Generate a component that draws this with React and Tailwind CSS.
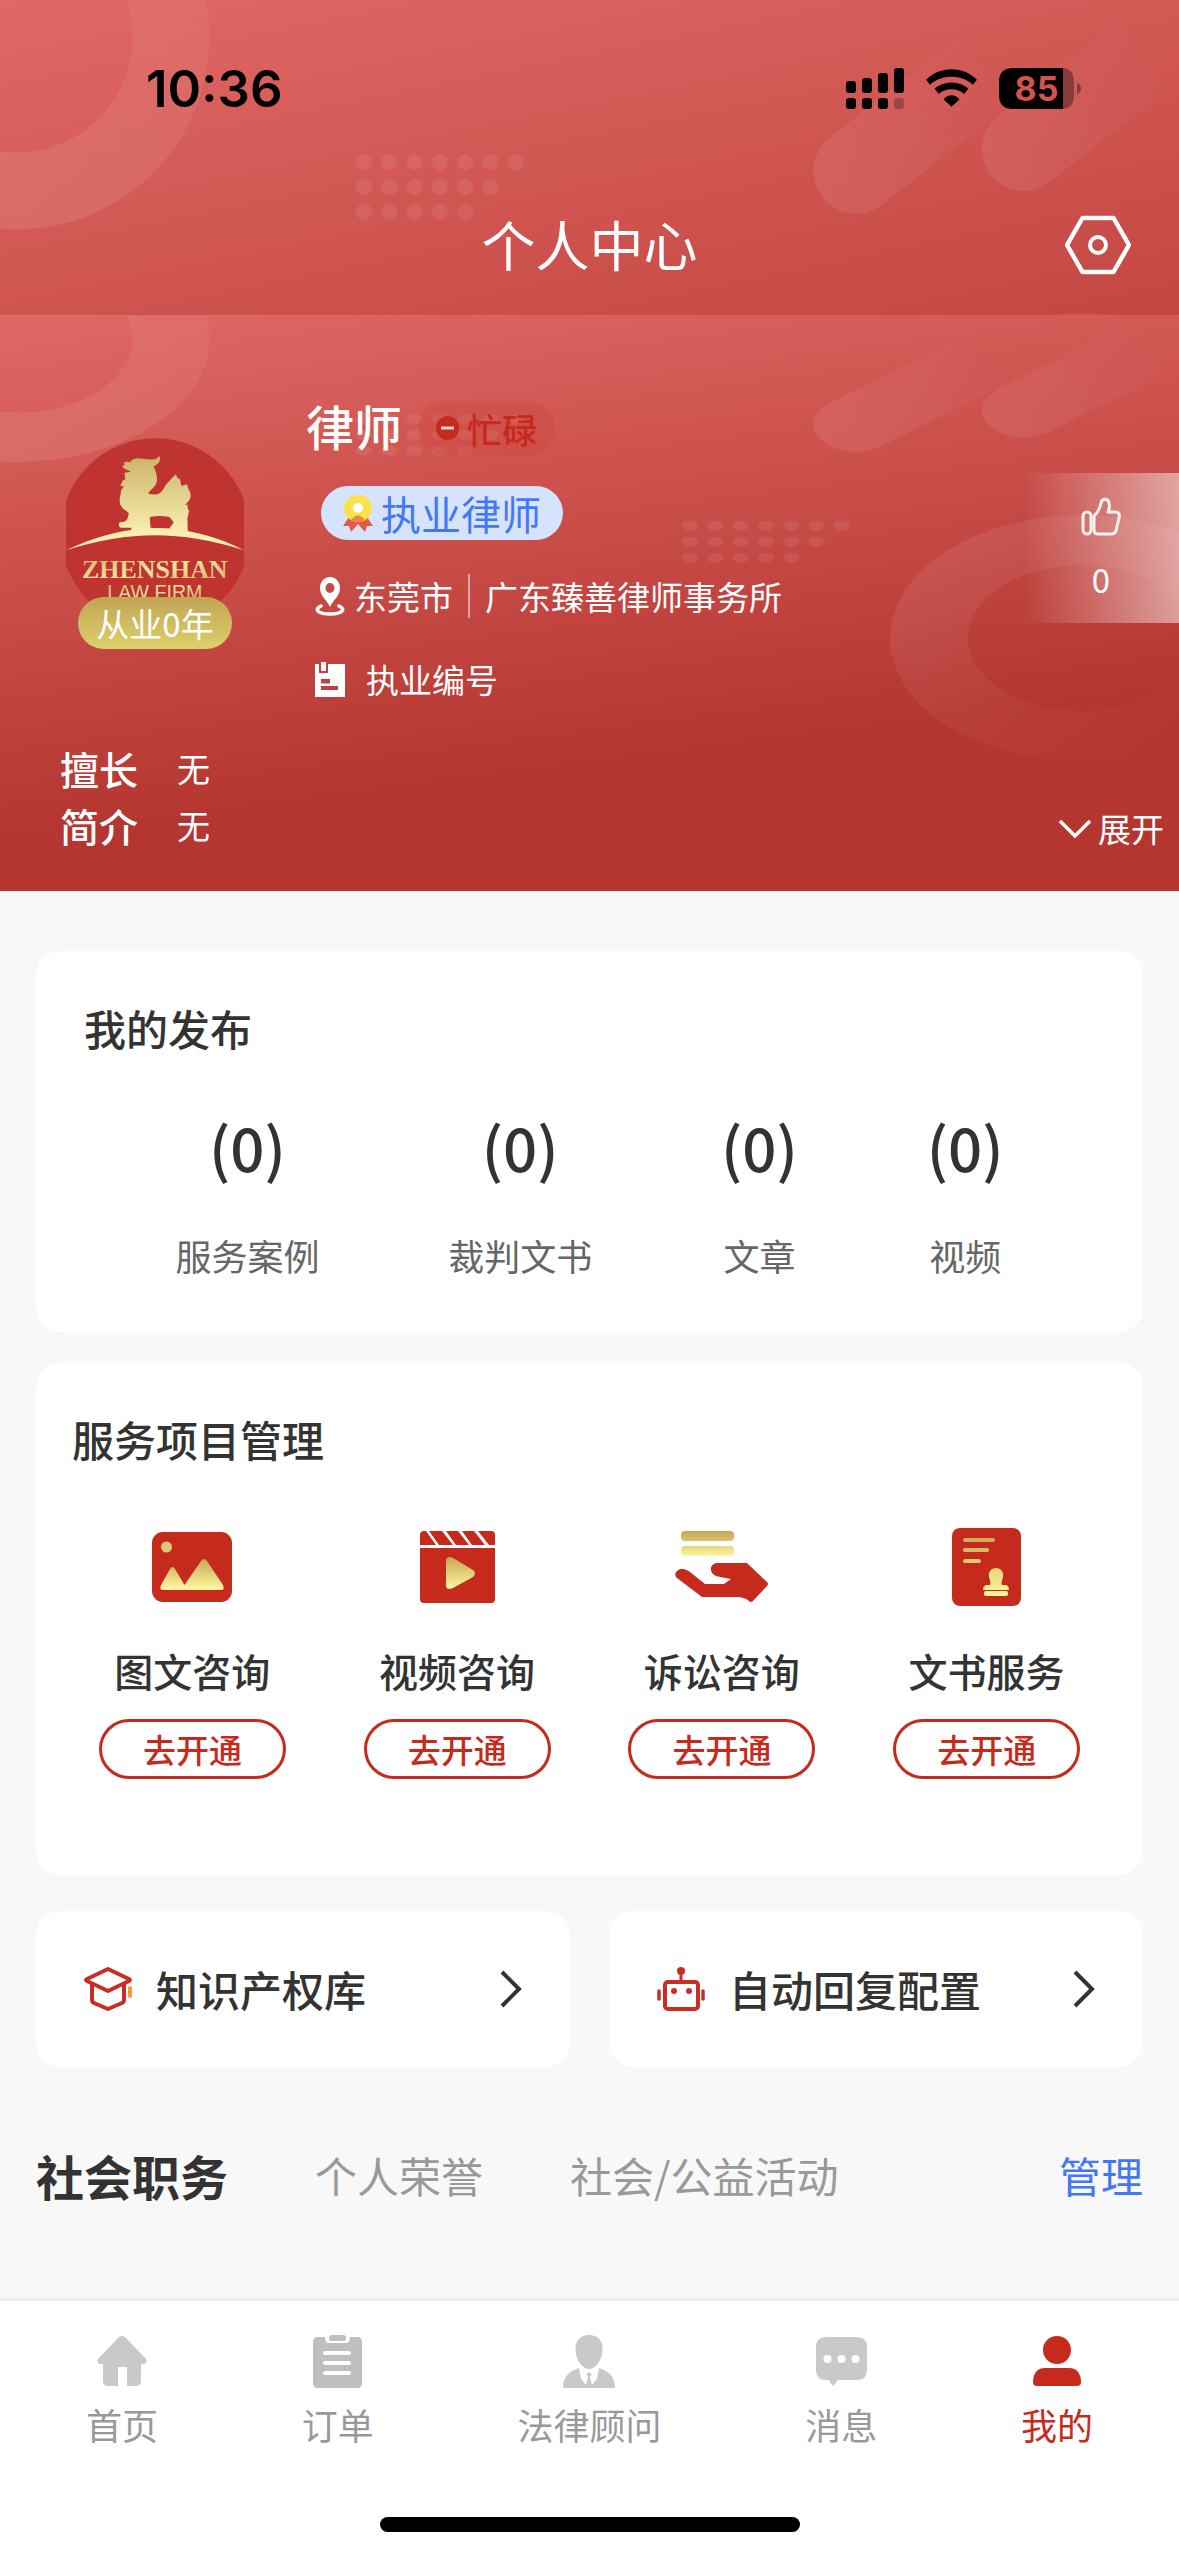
import React, { useState } from "react";

// Shared decorative banner, drawn on a 1179x900 canvas
const BannerArt = ({ id, fit }) => {
  const dotRows = [7, 6, 5];
  return (
    <svg
      className="absolute inset-0 w-full h-full"
      viewBox="0 0 1179 900"
      preserveAspectRatio={fit}
      aria-hidden="true"
    >
      <defs>
        <linearGradient id={`${id}-bg`} gradientUnits="userSpaceOnUse" x1="0" y1="0" x2="158" y2="790">
          <stop offset="0" stopColor="#e06865" />
          <stop offset="1" stopColor="#b53631" />
        </linearGradient>
        <linearGradient id={`${id}-ring`} gradientUnits="userSpaceOnUse" x1="60" y1="230" x2="200" y2="-120">
          <stop offset="0" stopColor="#fff" stopOpacity="0.1" />
          <stop offset="1" stopColor="#fff" stopOpacity="0.02" />
        </linearGradient>
        <linearGradient id={`${id}-arc`} gradientUnits="userSpaceOnUse" x1="900" y1="440" x2="1180" y2="640">
          <stop offset="0" stopColor="#fff" stopOpacity="0.08" />
          <stop offset="1" stopColor="#fff" stopOpacity="0" />
        </linearGradient>
        <linearGradient id={`${id}-p1`} gradientUnits="userSpaceOnUse" x1="820" y1="199" x2="990" y2="66">
          <stop offset="0" stopColor="#fff" stopOpacity="0.09" />
          <stop offset="1" stopColor="#fff" stopOpacity="0" />
        </linearGradient>
        <linearGradient id={`${id}-p2`} gradientUnits="userSpaceOnUse" x1="990" y1="176" x2="1150" y2="51">
          <stop offset="0" stopColor="#fff" stopOpacity="0.08" />
          <stop offset="1" stopColor="#fff" stopOpacity="0" />
        </linearGradient>
      </defs>
      <rect width="1179" height="900" fill={`url(#${id}-bg)`} />
      <circle cx="17" cy="37" r="154" fill="none" strokeWidth="77" stroke={`url(#${id}-ring)`} />
      <circle cx="1082" cy="505" r="153" fill="none" strokeWidth="78" stroke={`url(#${id}-arc)`} />
      <path d="M856 171 L1100 -20" strokeWidth="85" strokeLinecap="round" stroke={`url(#${id}-p1)`} />
      <path d="M1024 149 L1240 -20" strokeWidth="84" strokeLinecap="round" stroke={`url(#${id}-p2)`} />
      <g fill="#fff" fillOpacity="0.08">
        {dotRows.map((count, row) =>
          Array.from({ length: count }, (_, i) => (
            <React.Fragment key={`${row}-${i}`}>
              <circle cx={364 + i * 25.3} cy={162 + row * 25} r="8" />
              <circle cx={690 + i * 25.3} cy={329 + row * 25} r="8" />
            </React.Fragment>
          ))
        )}
      </g>
    </svg>
  );
};

const StatusIcons = () => (
  <div className="flex items-center">
    <svg className="w-[58px] h-[41px]" viewBox="0 0 58 41" aria-hidden="true">
      <rect x="0" y="13" width="10" height="12" rx="3" />
      <rect x="16" y="10" width="10" height="15" rx="3" />
      <rect x="32" y="5" width="10" height="20" rx="3" />
      <rect x="48" y="0" width="10" height="25" rx="3" />
      <rect x="0" y="30" width="10" height="11" rx="3" />
      <rect x="16" y="30" width="10" height="11" rx="3" />
      <rect x="32" y="30" width="10" height="11" rx="3" />
      <rect x="48" y="30" width="10" height="11" rx="3" fillOpacity="0.25" />
    </svg>
    <svg className="ml-[22px] w-[51px] h-[38px]" viewBox="0 0 150 111" aria-hidden="true">
      <path d="M0 31 C42 -10 108 -10 150 31 L138 46 C104 15 46 15 12 46 Z" />
      <path d="M25 57 C53 33 97 33 125 57 L112 73 C92 55 58 55 38 73 Z" />
      <path d="M52 89 C64 73 86 73 98 89 L75 111 Z" />
    </svg>
    <div className="relative ml-[22px] w-[82px] h-[41px]">
      <svg className="w-full h-full" viewBox="0 0 82 41" aria-hidden="true">
        <path d="M14 0 H64 V41 H14 Q0 41 0 27 V14 Q0 0 14 0 Z" />
        <path d="M64 0 Q75 1 75 14 V27 Q75 40 64 41 Z" fillOpacity="0.35" />
        <path d="M78 14.500 Q82 17 82 20.500 Q82 24 78 26.500 Z" fillOpacity="0.35" />
      </svg>
      <span className="absolute inset-y-0 left-0 w-[75px] text-center font-['Inter',sans-serif] font-bold text-[34px] leading-[41px] text-[#d1544f]">
        85
      </span>
    </div>
  </div>
);

const FirmLogo = () => (
  <svg className="w-[178px] h-[190px]" viewBox="47 39 535 570" role="img" aria-label="Zhenshan Law Firm">
    <defs>
      <linearGradient id="gold" gradientUnits="userSpaceOnUse" x1="0" y1="92" x2="0" y2="330">
        <stop offset="0" stopColor="#cdb36a" />
        <stop offset="1" stopColor="#f9f0b0" />
      </linearGradient>
      <linearGradient id="goldText" x1="0" y1="0" x2="1" y2="1">
        <stop offset="0" stopColor="#cfae62" />
        <stop offset="0.5" stopColor="#f2e29c" />
        <stop offset="1" stopColor="#cfae62" />
      </linearGradient>
    </defs>
    <circle cx="315" cy="324" r="285" fill="#bf3431" />
    <path
      fill="url(#gold)"
      fillRule="evenodd"
      d="M328 92 C332 105 328 116 310 123 C318 138 322 155 320 168 C318 185 303 192 294 204 C298 208 303 208 312 208 C325 209 330 204 334 199 C342 190 343 188 345 182 C352 172 362 165 366 158 L377 148 L383 160 L388 161 L391 167 L393 182 L411 178 C413 188 416 194 420 201 C424 217 420 228 403 240 L412 238 L413 250 L417 258 C415 268 412 275 412 283 L413 322 L243 322 L243 308 L212 308 C203 304 205 296 209 292 C222 292 230 288 232 280 L236 264 C228 258 215 250 210 238 C207 228 208 215 212 205 C210 197 215 190 222 184 L210 182 L218 166 L225 163 L223 143 L241 140 C232 132 222 134 216 124 L224 117 C218 112 222 107 240 111 C243 104 250 100 262 99 L290 102 C305 104 318 106 328 92 Z M299 276 C320 271 340 272 358 276 L371 292 L357 311 L301 308 Z"
    />
    <path fill="url(#gold)" d="M47 376 Q180 312 314 309 Q460 312 582 376 Q440 331 314 331 Q190 331 47 376 Z" />
    <text
      x="314"
      y="459"
      textAnchor="middle"
      fill="url(#goldText)"
      className="font-['Liberation_Serif',serif] font-bold text-[78px]"
    >
      ZHENSHAN
    </text>
    <text
      x="314"
      y="523"
      textAnchor="middle"
      fill="url(#goldText)"
      className="font-['Liberation_Sans',sans-serif] text-[59px]"
    >
      LAW FIRM
    </text>
  </svg>
);

const MedalIcon = () => (
  <svg className="w-[30px] h-[37px]" viewBox="0 0 30 37" aria-hidden="true">
    <path fill="#e25b49" d="M8 19 L0 31 L6 31 L8 37 L15 29 L22 37 L24 31 L30 31 L22 19 Z" />
    <ellipse cx="15" cy="13.500" rx="14" ry="13.500" fill="#fbe14b" />
    <path fill="#e98a4c" d="M8 25 Q15 16 22 25 Q15 29 8 25 Z" />
    <circle cx="15" cy="13" r="5" fill="#fff" />
  </svg>
);

const PinIcon = () => (
  <svg className="w-[30px] h-[39px]" viewBox="0 0 30 39" aria-hidden="true">
    <path
      fill="#fff"
      fillRule="evenodd"
      d="M15 0 C21 0 25 5 25 11 C25 19 18 23 15 30 C12 23 5 19 5 11 C5 5 9 0 15 0 Z M15 6 A4.500 5 0 1 0 15 16 A4.500 5 0 1 0 15 6 Z"
    />
    <path
      d="M6 29 C-1 32 2 37 15 37 C28 37 31 32 24 29"
      fill="none"
      stroke="#fff"
      strokeWidth="3.500"
      strokeLinecap="round"
    />
  </svg>
);

const LicenseIcon = () => (
  <svg className="w-[30px] h-[35px]" viewBox="0 0 30 35" aria-hidden="true">
    <path
      fill="#fff"
      fillRule="evenodd"
      d="M0 2 H4 V11 H13 V2 H30 V35 H0 Z M6 17 V21.500 H15 V17 Z M6 24 V28 H23 V24 Z"
    />
    <rect x="6" y="0" width="5" height="9" fill="#fff" />
  </svg>
);

const LikeIcon = () => (
  <svg
    className="w-10 h-10"
    viewBox="-1 -1 40 40"
    fill="none"
    stroke="#fff"
    strokeWidth="3"
    strokeLinejoin="round"
    strokeOpacity="0.9"
    aria-hidden="true"
  >
    <rect x="1" y="14" width="8" height="22" rx="4" />
    <path d="M12 18 C17 14 18 10 19 5 C20 0 26 0 27 5 C28 9 27 12 26 14 H34 C37 14 38 17 37 20 L34 33 Q33 36 29 36 H16 Q12 36 12 32 Z" />
  </svg>
);

const GoldDefs = ({ id, y1, y2 }) => (
  <defs>
    <linearGradient id={id} gradientUnits="userSpaceOnUse" x1="0" y1={y1} x2="0" y2={y2}>
      <stop offset="0" stopColor="#c6a552" />
      <stop offset="1" stopColor="#fdf9a0" />
    </linearGradient>
  </defs>
);

const PictureIcon = () => (
  <svg className="w-[80px] h-[70px]" viewBox="0 0 80 70" aria-hidden="true">
    <GoldDefs id="g1" y1="27" y2="57" />
    <rect width="80" height="70" rx="11" fill="#c62a1d" />
    <circle cx="14.500" cy="15" r="5.500" fill="#dcc878" />
    <path
      fill="url(#g1)"
      d="M18 37 Q20.500 33 23 37 L32.500 53 L49 29 Q52.500 25 55 29 L71 53 Q73 58 69 58 H11 Q7 58 9 53 Z"
    />
  </svg>
);

const VideoIcon = () => (
  <svg className="w-[75px] h-[72px]" viewBox="0 0 75 72" aria-hidden="true">
    <GoldDefs id="g2" y1="26" y2="58" />
    <path
      fill="#c62a1d"
      d="M4 0 H6 L16 14 H0 V4 Q0 0 4 0 Z M9 0 H22 L33 14 H19 Z M26 0 H38 L49 14 H36 Z M42 0 H54 L65 14 H52 Z M58 0 H71 Q75 0 75 4 V14 H69 Z"
    />
    <path fill="#c62a1d" d="M0 17 H75 V68 Q75 72 71 72 H4 Q0 72 0 68 Z" />
    <path fill="url(#g2)" d="M26 31 Q26 24 33 27 L53 39 Q57 42 53 46 L33 57 Q26 60 26 54 Z" />
  </svg>
);

const HandIcon = () => (
  <svg className="w-[93px] h-[72px]" viewBox="0 0 93 72" aria-hidden="true">
    <GoldDefs id="g3" y1="0" y2="26" />
    <rect x="6" y="0" width="53" height="10" rx="4" fill="url(#g3)" />
    <rect x="6" y="15" width="53" height="10" rx="4" fill="url(#g3)" />
    <path
      fill="#c62a1d"
      d="M7 38 C10 38 12 39 15 41 L30 53 H49 L56 48 C50 47 45 46 41 45 C34 42 34 33 42 32 H72 L92 51 Q94 53 92 55 L78 70 Q76 72 74 70 C70 67 67 66 62 66 H27 L2 47 C-2 43 2 38 7 38 Z"
    />
  </svg>
);

const DocumentIcon = () => (
  <svg className="w-[69px] h-[78px]" viewBox="0 0 69 78" aria-hidden="true">
    <GoldDefs id="g4" y1="5" y2="68" />
    <rect width="69" height="78" rx="8" fill="#c62a1d" />
    <g fill="url(#g4)">
      <rect x="11" y="10" width="32" height="4" rx="2" />
      <rect x="11" y="20" width="26" height="4" rx="2" />
      <rect x="11" y="31" width="18" height="4" rx="2" />
      <path d="M44 40 C49 40 52 44 51 49 C50 53 49 54 50 57 H54 Q57 58 57 62 H31 Q31 58 34 57 H38 C39 54 38 53 37 49 C36 44 39 40 44 40 Z" />
      <rect x="32" y="63" width="24" height="5" rx="2" />
    </g>
  </svg>
);

const CapIcon = () => (
  <svg
    className="w-12 h-[44px]"
    viewBox="0 0 48 44"
    fill="none"
    stroke="#c92e26"
    strokeWidth="4"
    strokeLinejoin="round"
    aria-hidden="true"
  >
    <path d="M24 2 L45 12 Q47 13 45 14 L24 24 L3 14 Q1 13 3 12 Z" />
    <path d="M8 17 V33 Q8 35 10 36 L24 42 L38 36 Q40 35 40 33 V17" />
    <path d="M46 21 V29" stroke="#f39a3b" strokeLinecap="round" />
  </svg>
);

const RobotIcon = () => (
  <svg
    className="w-12 h-[44px]"
    viewBox="0 0 48 44"
    fill="none"
    stroke="#c92e26"
    strokeWidth="4"
    strokeLinecap="round"
    aria-hidden="true"
  >
    <rect x="8" y="15" width="33" height="27" rx="3" />
    <path d="M24 6 V14" strokeWidth="3" />
    <circle cx="24" cy="4" r="4" fill="#c92e26" stroke="none" />
    <circle cx="17" cy="24" r="3" fill="#c92e26" stroke="none" />
    <circle cx="32" cy="24" r="3" fill="#c92e26" stroke="none" />
    <path d="M2 24 V32 M46 24 V32" strokeWidth="3.500" />
  </svg>
);

const HomeIcon = () => (
  <svg className="w-[50px] h-[50px]" viewBox="0 0 50 50" fill="#c9c9c9" aria-hidden="true">
    <path d="M22 1 Q25 -1 28 1 L49 23 Q51 27 47 28 H44 V45 Q44 50 39 50 H30 V31 H21 V50 H11 Q6 50 6 45 V28 H3 Q-1 27 1 23 Z" />
  </svg>
);

const OrderIcon = () => (
  <svg className="w-[49px] h-[53px]" viewBox="0 0 49 53" aria-hidden="true">
    <path
      fill="#bfbfbf"
      d="M5 2 H12 Q12 8 16 8 H33 Q37 8 37 2 H44 Q49 2 49 7 V48 Q49 53 44 53 H5 Q0 53 0 48 V7 Q0 2 5 2 Z"
    />
    <rect x="16" y="0" width="17" height="6" rx="2.500" fill="#bfbfbf" />
    <path d="M12 18 H36 M12 28 H36 M12 38 H36" stroke="#fff" strokeWidth="4" strokeLinecap="round" />
  </svg>
);

const LawyerIcon = () => (
  <svg className="w-[52px] h-[53px]" viewBox="0 0 52 53" fill="#c9c9c9" aria-hidden="true">
    <path d="M26 0 C34 0 40 5 39.500 15 C39 26 32 34 26 34 C20 34 13 26 12.500 15 C12 5 18 0 26 0 Z" />
    <path d="M16 33 L18 44 L23 50 L25 42 L23.500 39 L26 37 L28.500 39 L27 42 L29 50 L34 44 L36 33 C47 37 52 42 52 53 H0 C0 42 5 37 16 33 Z" />
  </svg>
);

const MessageIcon = () => (
  <svg className="w-[51px] h-[49px]" viewBox="0 0 51 49" aria-hidden="true">
    <path
      fill="#c9c9c9"
      d="M10 0 H41 Q51 0 51 10 V33 Q51 43 41 43 H22 L18 48 Q17 49 16 48 L13 43 H10 Q0 43 0 33 V10 Q0 0 10 0 Z"
    />
    <circle cx="11.500" cy="22" r="4" fill="#fff" />
    <circle cx="25.500" cy="22" r="4" fill="#fff" />
    <circle cx="39.500" cy="22" r="4" fill="#fff" />
  </svg>
);

const MineIcon = () => (
  <svg className="w-12 h-[50px]" viewBox="0 0 48 50" fill="#c62a1d" aria-hidden="true">
    <circle cx="24" cy="14" r="14" />
    <path d="M12 32 H36 C44 32 48 38 48 46 Q48 50 44 50 H4 Q0 50 0 46 C0 38 4 32 12 32 Z" />
  </svg>
);

const ChevronRight = () => (
  <svg className="ml-auto w-[22px] h-[38px]" viewBox="0 0 22 38" fill="none" aria-hidden="true">
    <path d="M2 2 L19 19 L2 36" stroke="#333" strokeWidth="4" />
  </svg>
);

const publishStats = [
  { label: "服务案例", count: 0 },
  { label: "裁判文书", count: 0 },
  { label: "文章", count: 0 },
  { label: "视频", count: 0 },
];

const services = [
  { label: "图文咨询", Icon: PictureIcon },
  { label: "视频咨询", Icon: VideoIcon },
  { label: "诉讼咨询", Icon: HandIcon },
  { label: "文书服务", Icon: DocumentIcon },
];

const shortcuts = [
  { label: "知识产权库", Icon: CapIcon },
  { label: "自动回复配置", Icon: RobotIcon },
];

const tabs = ["社会职务", "个人荣誉", "社会/公益活动"];

const navItems = [
  { label: "首页", Icon: HomeIcon },
  { label: "订单", Icon: OrderIcon },
  { label: "法律顾问", Icon: LawyerIcon },
  { label: "消息", Icon: MessageIcon },
  { label: "我的", Icon: MineIcon, active: true },
];

const App = () => {
  const [activeTab, setActiveTab] = useState(0);

  return (
    <div className="min-h-screen flex flex-col bg-[#f8f8f8] text-[#333] font-['Noto_Sans_CJK_SC',sans-serif]">
      {/* Header */}
      <header className="relative overflow-hidden">
        <BannerArt id="top" fit="xMidYMin slice" />
        <div className="relative pt-[67px] pb-10">
          <div className="flex items-center justify-between h-[42px] pl-[146px] pr-[98px] text-black">
            <span className="font-['Inter',sans-serif] font-semibold text-[51px] leading-none">10:36</span>
            <StatusIcons />
          </div>
          <div className="mt-[104px] grid grid-cols-[1fr_auto_1fr] items-end px-12">
            <h1 className="col-start-2 text-[54px] leading-[62px] text-white">个人中心</h1>
            <button className="justify-self-end" aria-label="设置">
              <svg
                className="w-[66px] h-[60px]"
                viewBox="0 0 66 60"
                fill="none"
                stroke="#fff"
                strokeLinejoin="round"
                aria-hidden="true"
              >
                <path d="M17.500 3 H48.500 L64 30 L48.500 57 H17.500 L2 30 Z" strokeWidth="4.500" />
                <circle cx="33" cy="30" r="8" strokeWidth="4" />
              </svg>
            </button>
          </div>
        </div>
      </header>

      {/* Profile */}
      <section className="relative overflow-hidden text-white">
        <BannerArt id="profile" fit="none" />
        <div className="relative pt-[86px] pb-[37px]">
          <div className="flex items-start pl-[66px]">
            <div className="relative mt-[37px] shrink-0">
              <FirmLogo />
              <span className="absolute left-1/2 top-[159px] -translate-x-1/2 w-[154px] h-[52px] flex items-center justify-center rounded-full bg-gradient-to-b from-[#c2a455] to-[#dbd269] text-[33px] leading-none whitespace-nowrap">
                从业0年
              </span>
            </div>

            <div className="ml-[62px]">
              <div className="flex items-start h-[54px]">
                <h2 className="text-[48px] leading-[48px] font-medium">律师</h2>
                <span className="ml-4 h-[54px] flex items-center rounded-full bg-[#c62a1d]/15 px-[18px] text-[35px] leading-none font-medium text-[#c62a1d]">
                  <svg className="mr-2 w-[23px] h-6" viewBox="0 0 23 24" aria-hidden="true">
                    <ellipse cx="11.500" cy="12" rx="11.500" ry="12" fill="#c62a1d" />
                    <rect x="5" y="10.500" width="13" height="3" fill="#f3d6d3" />
                  </svg>
                  忙碌
                </span>
              </div>
              <span className="mt-[31px] ml-[15px] w-fit h-[54px] flex items-center gap-2 rounded-full bg-[#d6e3fc] px-[22px] text-[40px] leading-none text-[#4377f6]">
                <MedalIcon />
                执业律师
              </span>
              <p className="mt-[33px] ml-[9px] flex items-center h-[46px] text-[33px] leading-none">
                <PinIcon />
                <span className="ml-[9px]">东莞市</span>
                <span className="mx-[15px] w-[2px] h-11 bg-white/50" />
                <span>广东臻善律师事务所</span>
              </p>
              <p className="mt-10 ml-[9px] flex items-center h-10 text-[33px] leading-none">
                <LicenseIcon />
                <span className="ml-[21px]">执业编号</span>
              </p>
            </div>

            <button className="ml-auto mt-[72px] w-[156px] h-[150px] flex flex-col items-center justify-center gap-[22px] bg-gradient-to-r from-transparent to-white/50 text-[33px]">
              <LikeIcon />
              <span className="leading-10">0</span>
            </button>
          </div>

          <div className="mt-[41px] flex items-end justify-between pl-[60px] pr-[15px]">
            <dl className="grid grid-cols-[auto_auto] gap-x-[39px] text-[33px] leading-[57px]">
              <dt className="text-[39px] font-medium">擅长</dt>
              <dd>无</dd>
              <dt className="text-[39px] font-medium">简介</dt>
              <dd>无</dd>
            </dl>
            <button className="flex items-center gap-[6px] text-[33px] leading-[51px]">
              <svg className="w-[34px] h-5" viewBox="0 0 34 20" fill="none" aria-hidden="true">
                <path d="M2 2 L17 17 L32 2" stroke="#fff" strokeWidth="3.500" />
              </svg>
              展开
            </button>
          </div>
        </div>
      </section>

      <main className="flex-1 px-9 pt-[60px] pb-20">
        {/* My publications */}
        <section className="rounded-3xl bg-white pt-[47px] pb-[50px]">
          <h2 className="px-12 text-[42px] leading-[60px] font-medium">我的发布</h2>
          <ul className="mt-12 flex justify-around px-[75px]">
            {publishStats.map((item) => (
              <li key={item.label} className="flex flex-col items-center">
                <span className="text-[60px] leading-[80px] font-medium">({item.count})</span>
                <span className="mt-[42px] text-[36px] leading-[54px] text-[#666]">{item.label}</span>
              </li>
            ))}
          </ul>
        </section>

        {/* Service management */}
        <section className="mt-[31px] rounded-3xl bg-white pt-[46px] pb-24">
          <h2 className="px-9 text-[42px] leading-[60px] font-medium">服务项目管理</h2>
          <ul className="mt-[59px] grid grid-cols-4 px-6">
            {services.map(({ label, Icon }) => (
              <li key={label} className="flex flex-col items-center">
                <div className="h-[78px] flex items-center">
                  <Icon />
                </div>
                <span className="mt-[34px] text-[39px] leading-[60px] font-medium">{label}</span>
                <button className="mt-[19px] h-[60px] px-[41px] rounded-full border-3 border-[#c62a1d] text-[33px] leading-none font-medium text-[#c62a1d]">
                  去开通
                </button>
              </li>
            ))}
          </ul>
        </section>

        {/* Shortcuts */}
        <div className="mt-9 grid grid-cols-2 gap-[39px]">
          {shortcuts.map(({ label, Icon }) => (
            <a key={label} href="#" className="flex items-center rounded-3xl bg-white px-12 py-12">
              <Icon />
              <span className="ml-6 text-[42px] leading-[60px] font-medium">{label}</span>
              <ChevronRight />
            </a>
          ))}
        </div>

        {/* Tabs */}
        <div className="mt-[72px] flex items-center gap-[87px] leading-[72px]">
          {tabs.map((tab, i) => (
            <button
              key={tab}
              onClick={() => setActiveTab(i)}
              className={i === activeTab ? "text-[48px] font-bold" : "text-[42px] text-[#999]"}
            >
              {tab}
            </button>
          ))}
          <a href="#" className="ml-auto text-[42px] text-[#4377f6]">
            管理
          </a>
        </div>
      </main>

      {/* Bottom navigation */}
      <nav className="border-t-3 border-[#eee] bg-white pt-[33px] pb-6">
        <div className="flex justify-around px-[14px]">
          {navItems.map(({ label, Icon, active }) => (
            <a key={label} href="#" className="flex flex-col items-center">
              <div className="h-[54px] flex items-center">
                <Icon />
              </div>
              <span
                className={
                  active
                    ? "mt-[9px] text-[36px] leading-[54px] text-[#c62a1d]"
                    : "mt-[9px] text-[36px] leading-[54px] text-[#999]"
                }
              >
                {label}
              </span>
            </a>
          ))}
        </div>
        <div className="mx-auto mt-[66px] w-[420px] h-[15px] rounded-full bg-black" />
      </nav>
    </div>
  );
};

export default App;
